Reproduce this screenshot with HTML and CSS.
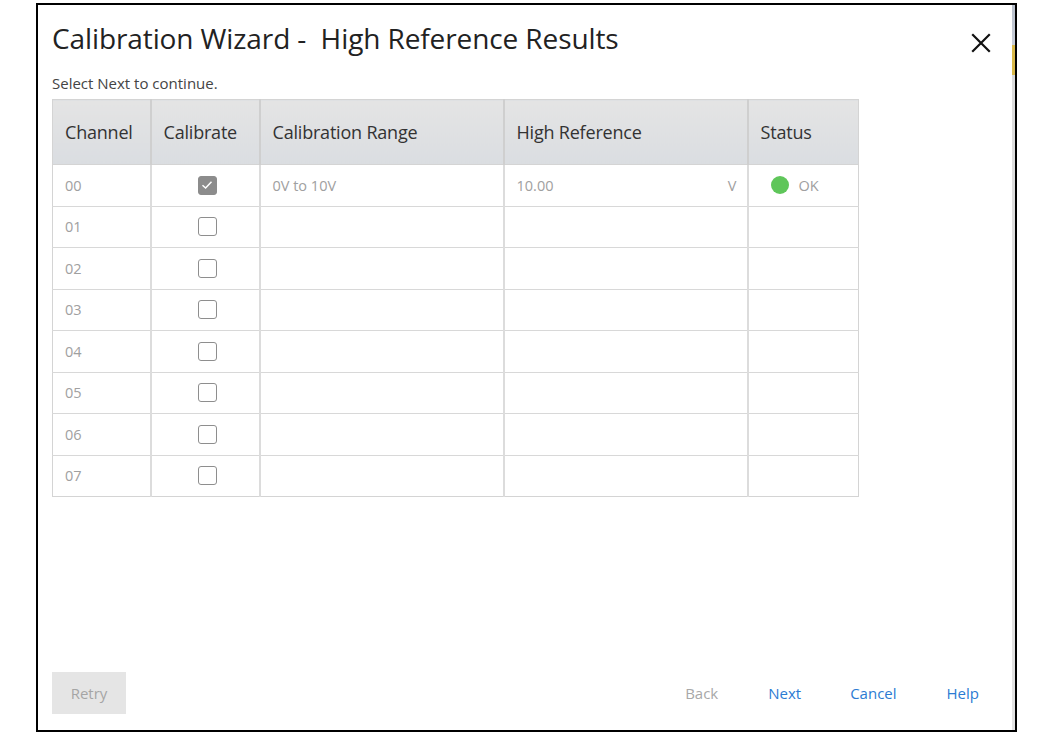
FILE: index.html
```html
<!DOCTYPE html>
<html>
<head>
<meta charset="utf-8">
<link rel="stylesheet" href="styles.css">
</head>
<body>
<div class="dialog">
  <div class="edge-strip"><span class="edge-accent"></span></div>
  <div class="head">
    <h1 class="title">Calibration Wizard -&nbsp; High Reference Results</h1>
    <button class="close" aria-label="Close">
      <svg width="20" height="20" viewBox="0 0 20 20"><path d="M2 2 L18 18 M18 2 L2 18" stroke="#111" stroke-width="2.2" fill="none" stroke-linecap="square"/></svg>
    </button>
  </div>
  <p class="subtitle">Select Next to continue.</p>
  <table class="grid">
    <colgroup>
      <col class="c-ch"><col class="c-cal"><col class="c-range"><col class="c-ref"><col class="c-status">
    </colgroup>
    <thead>
      <tr>
        <th>Channel</th><th>Calibrate</th><th>Calibration Range</th><th>High Reference</th><th>Status</th>
      </tr>
    </thead>
    <tbody>
      <tr>
        <td>00</td>
        <td class="cb-cell"><span class="cb checked"><svg width="12" height="10" viewBox="0 0 12 10"><path d="M1.5 5.2 L4.6 8 L10.5 1.8" stroke="#fff" stroke-width="1.5" fill="none"/></svg></span></td>
        <td>0V to 10V</td>
        <td><div class="ref"><span>10.00</span><span>V</span></div></td>
        <td><div class="status"><span class="dot"></span><span>OK</span></div></td>
      </tr>
      <tr><td>01</td><td class="cb-cell"><span class="cb"></span></td><td></td><td></td><td></td></tr>
      <tr><td>02</td><td class="cb-cell"><span class="cb"></span></td><td></td><td></td><td></td></tr>
      <tr><td>03</td><td class="cb-cell"><span class="cb"></span></td><td></td><td></td><td></td></tr>
      <tr><td>04</td><td class="cb-cell"><span class="cb"></span></td><td></td><td></td><td></td></tr>
      <tr><td>05</td><td class="cb-cell"><span class="cb"></span></td><td></td><td></td><td></td></tr>
      <tr><td>06</td><td class="cb-cell"><span class="cb"></span></td><td></td><td></td><td></td></tr>
      <tr><td>07</td><td class="cb-cell"><span class="cb"></span></td><td></td><td></td><td></td></tr>
    </tbody>
  </table>
  <div class="spacer"></div>
  <div class="footer">
    <button class="retry">Retry</button>
    <div class="actions">
      <span class="link disabled back">Back</span>
      <span class="link next">Next</span>
      <span class="link cancel">Cancel</span>
      <span class="link help">Help</span>
    </div>
  </div>
</div>
</body>
</html>
```
FILE: styles.css
```css
html, body {
  margin: 0;
  padding: 0;
  background: #ffffff;
}
body {
  font-family: "Open Sans", "Noto Sans", sans-serif;
  color: #333;
}
.dialog {
  position: relative;
  box-sizing: border-box;
  margin: 3px 0 0 36px;
  width: 981px;
  height: 729px;
  border: 2px solid #000;
  background: #fff;
  padding: 0 0 0 14px;
  display: flex;
  flex-direction: column;
}
.edge-strip {
  position: absolute;
  top: 0;
  right: 0;
  width: 3px;
  bottom: 0;
  background: linear-gradient(#b9c0cc 0, #c9ced8 40px, #dcdcdc 80px, #e2e2e2 100%);
}
.edge-accent {
  position: absolute;
  top: 40px;
  left: 0;
  width: 3px;
  height: 30px;
  background: #d9b94a;
}
.head {
  display: flex;
  align-items: flex-start;
  justify-content: space-between;
  margin-top: 15px;
  padding-right: 24px;
}
.title {
  margin: 0;
  font-weight: 400;
  font-size: 28px;
  line-height: 36px;
  color: #222;
  letter-spacing: -0.1px;
}
.close {
  border: 0;
  background: none;
  padding: 0;
  margin-top: 13px;
  width: 20px;
  height: 20px;
}
.subtitle {
  margin: 17px 0 0 0;
  font-size: 15px;
  line-height: 20px;
  color: #444;
}
.grid {
  margin-top: 6px;
  border-collapse: collapse;
  table-layout: fixed;
  width: 807px;
  border: 1px solid #d4d4d4;
}
.c-ch { width: 98px; }
.c-cal { width: 109px; }
.c-range { width: 244px; }
.c-ref { width: 244px; }
.c-status { width: 111px; }
.grid th {
  height: 64px;
  padding: 0 0 0 12px;
  text-align: left;
  font-weight: 400;
  font-size: 18px;
  color: #333;
  background: linear-gradient(#e4e4e4, #dadde1);
  border-left: 2px solid #cfcfcf;
  border-bottom: 1px solid #d4d4d4;
  letter-spacing: -0.2px;
}
.grid th:first-child { border-left: 0; }
.grid td {
  height: 40.5px;
  padding: 0 0 0 12px;
  font-size: 14.5px;
  color: #a0a0a0;
  border-left: 2px solid #dcdcdc;
  border-top: 1px solid #d8d8d8;
  vertical-align: middle;
}
.grid td:first-child { border-left: 0; }
.grid td.cb-cell {
  padding: 0 0 0 46px;
}
.cb {
  display: flex;
  align-items: center;
  justify-content: center;
  box-sizing: border-box;
  width: 19px;
  height: 19px;
  border: 1.5px solid #8e8e8e;
  border-radius: 3px;
  background: #fff;
}
.cb.checked {
  background: #8c8c8c;
  border-color: #8c8c8c;
}
.ref {
  display: flex;
  justify-content: space-between;
  padding-right: 10px;
}
.status {
  display: flex;
  align-items: center;
  gap: 10px;
  padding-left: 10px;
}
.dot {
  width: 18px;
  height: 18px;
  border-radius: 50%;
  background: #5fc65a;
}
.spacer { flex: 1; }
.footer {
  display: flex;
  align-items: center;
  justify-content: space-between;
  margin-bottom: 16px;
  padding-right: 36px;
}
.retry {
  width: 74px;
  height: 42px;
  border: 0;
  background: #e5e5e5;
  font-family: "Open Sans", "Noto Sans", sans-serif;
  font-size: 15px;
  color: #a5a5a5;
  padding: 0;
}
.actions {
  display: flex;
  align-items: center;
  font-size: 15px;
}
.link { color: #2b7bd3; }
.link.disabled { color: #a8a8a8; }
.back { margin-right: 50px; }
.next { margin-right: 49px; }
.cancel { margin-right: 50px; }
```
